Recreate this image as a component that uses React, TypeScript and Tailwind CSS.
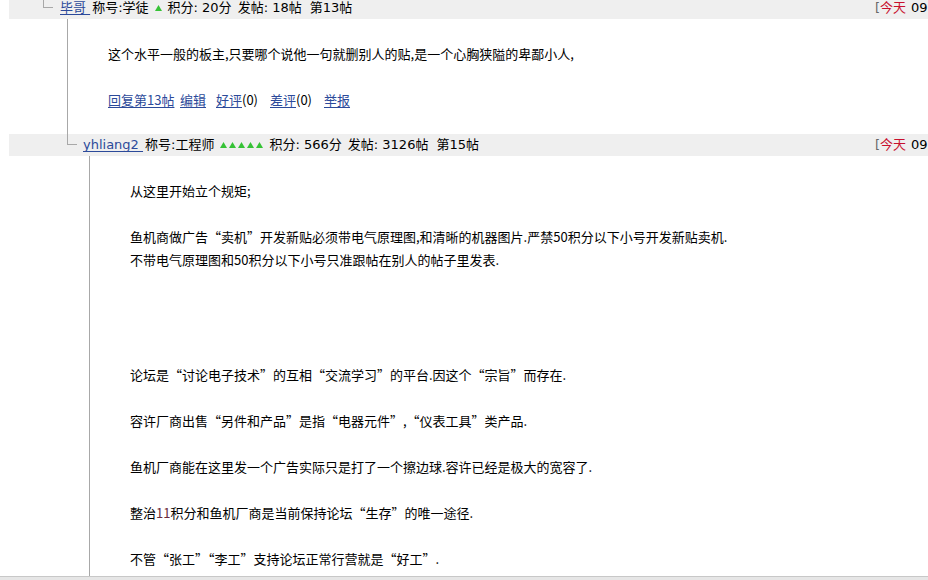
import React from "react";

const Tri = ({ n }: { n: number }) => (
  <span className="inline-flex items-center gap-[2px] mx-[6px]">
    {Array.from({ length: n }).map((_, i) => (
      <svg key={i} width="7" height="6" viewBox="0 0 7 6">
        <polygon points="3.5,0 7,6 0,6" fill="#36c236" />
      </svg>
    ))}
  </span>
);

const Stamp = () => (
  <div className="w-[53px] shrink-0 overflow-hidden whitespace-nowrap flex items-center">
    <span className="text-[#666]">[</span>
    <span className="text-[#c8102e]">今天</span>
    <span className="ml-[5px]">09:32:15]</span>
  </div>
);

const Header = ({
  spacer,
  conn,
  name,
  title,
  stars,
  score,
  posts,
  floor,
}: {
  spacer: string;
  conn: string;
  name: string;
  title: string;
  stars: number;
  score: string;
  posts: string;
  floor: string;
}) => (
  <div className="ml-[9px] h-[22px] bg-[#efefef] flex items-stretch font-['DejaVu_Sans','Noto_Sans_CJK_SC',sans-serif] text-[13px]">
    <div className={`${spacer} shrink-0`} />
    <div className={`${conn} shrink-0`}>
      <div className="h-[11px] w-[10px] border-l border-b border-[#a8a8a8]" />
    </div>
    <div className="flex-1 flex items-center whitespace-nowrap overflow-hidden">
      <a className="text-[#2c4a9a] underline underline-offset-2 whitespace-pre">{name + " "}</a>
      <span className="ml-[2px]">称号:{title}</span>
      <Tri n={stars} />
      <span>积分: {score}分</span>
      <span className="ml-[6px]">发帖: {posts}帖</span>
      <span className="ml-[8px]">第{floor}帖</span>
    </div>
    <Stamp />
  </div>
);

const Link = ({ children }: { children: React.ReactNode }) => (
  <a className="text-[#2c4a9a] underline underline-offset-2">{children}</a>
);

export default function App() {
  return (
    <div className="h-[580px] w-[928px] overflow-hidden flex flex-col bg-white text-[13px] text-black font-['Noto_Sans_CJK_SC',sans-serif]">
      <div className="flex-1 overflow-hidden">
        <div className="-mt-[3px]">
          <Header
            spacer="w-[34px]"
            conn="w-[17px]"
            name="毕哥"
            title="学徒"
            stars={1}
            score="20"
            posts="18"
            floor="13"
          />
          <div className="flex">
            <div className="w-[67px] shrink-0" />
            <div className="flex-1 border-l border-[#a8a8a8] pl-[40px] py-[23px] leading-[23px]">
              <p>这个水平一般的板主,只要哪个说他一句就删别人的贴,是一个心胸狭隘的卑鄙小人,</p>
              <p className="mt-[23px] flex">
                <span className="w-[72px] shrink-0"><Link>回复第13帖</Link></span>
                <span className="w-[36px] shrink-0"><Link>编辑</Link></span>
                <span className="w-[54px] shrink-0"><Link>好评</Link>(0)</span>
                <span className="w-[54px] shrink-0"><Link>差评</Link>(0)</span>
                <span><Link>举报</Link></span>
              </p>
            </div>
          </div>
          <Header
            spacer="w-[58px]"
            conn="w-[16px]"
            name="yhliang2"
            title="工程师"
            stars={5}
            score="566"
            posts="3126"
            floor="15"
          />
          <div className="flex">
            <div className="w-[89px] shrink-0" />
            <div className="flex-1 border-l border-[#a8a8a8] pl-[40px] pt-[23px] leading-[23px]">
              <p>从这里开始立个规矩;</p>
              <p className="mt-[23px]">鱼机商做广告“卖机”开发新贴必须带电气原理图,和清晰的机器图片.严禁50积分以下小号开发新贴卖机.</p>
              <p>不带电气原理图和50积分以下小号只准跟帖在别人的帖子里发表.</p>
              <p className="mt-[92px]">论坛是“讨论电子技术”的互相“交流学习”的平台.因这个“宗旨”而存在.</p>
              <p className="mt-[23px]">容许厂商出售“另件和产品”是指“电器元件”,“仪表工具”类产品.</p>
              <p className="mt-[23px]">鱼机厂商能在这里发一个广告实际只是打了一个擦边球.容许已经是极大的宽容了.</p>
              <p className="mt-[23px]">整治<span className="text-[#6a2a3a]">11</span>积分和鱼机厂商是当前保持论坛“生存”的唯一途径.</p>
              <p className="mt-[23px]">不管“张工”“李工”支持论坛正常行营就是“好工”.</p>
              <p className="mt-[23px]">大家共同维护论坛的秩序.</p>
              <p className="mt-[23px]">&nbsp;</p>
            </div>
          </div>
        </div>
      </div>
      <div className="h-[4px] shrink-0 border-t border-[#c8c8c8] bg-[#e6e6e6]" />
    </div>
  );
}
